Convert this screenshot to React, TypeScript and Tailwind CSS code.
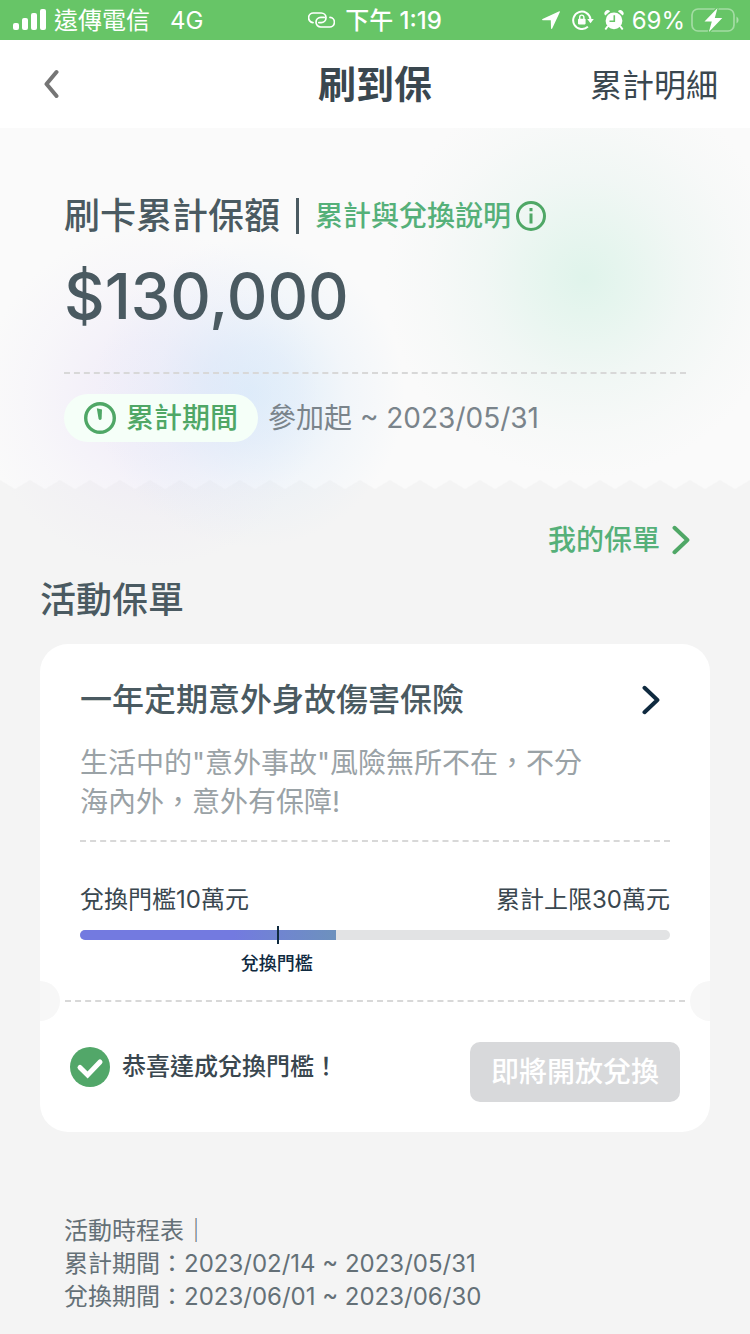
import clsx from 'clsx'

const LIMIT = 300000
const THRESHOLD = 100000
const AMOUNT = 130000

const schedule = [
  { label: '累計期間', range: '2023/02/14 ~ 2023/05/31' },
  { label: '兌換期間', range: '2023/06/01 ~ 2023/06/30' },
]

function Chevron({ className }: { className?: string }) {
  return (
    <svg viewBox="0 0 18 30" fill="none" stroke="currentColor" strokeWidth="4" strokeLinecap="round" strokeLinejoin="round" className={clsx('h-[30px] w-[18px] shrink-0', className)} aria-hidden="true">
      <path d="M2.5 2.8 15.4 15 2.5 27.2" />
    </svg>
  )
}

function StatusBar() {
  return (
    <div className="grid h-10 grid-cols-[1fr_auto_1fr] items-center bg-[#67c567] text-2xl leading-[34px] text-white">
      <div className="flex items-center pl-[13px]">
        <svg viewBox="0 0 33 22" fill="currentColor" className="h-[22px] w-[33px]" aria-hidden="true">
          <rect x="0" y="14" width="6" height="7" rx="2" />
          <rect x="9" y="9" width="6" height="12" rx="2" />
          <rect x="18" y="4" width="6" height="17" rx="2" />
          <rect x="27" y="0" width="6" height="21" rx="2" />
        </svg>
        <span className="ml-2 pt-0.5">遠傳電信</span>
        <span className="ml-5 pt-0.5">4G</span>
      </div>
      <div className="flex items-center gap-2.5">
        <svg viewBox="0 0 27 16" fill="none" stroke="currentColor" strokeWidth="1.7" strokeLinecap="round" className="h-4 w-[27px]" aria-hidden="true">
          <path d="M5 10.600A4.800 4.800 0 0 1 5.800 1h7.400a4.800 4.800 0 0 1 0 9.600h-2.400" />
          <path d="M22 5.400a4.800 4.800 0 0 1-.8 9.600h-8.400a4.800 4.800 0 0 1 0-9.600h3.400" />
        </svg>
        <span className="pt-0.5 font-medium">下午 1:19</span>
      </div>
      <div className="flex items-center justify-end pr-[11px]">
        <svg viewBox="0 0 18 18" fill="currentColor" className="size-[18px]" aria-hidden="true">
          <path d="M17.300.3.500 8c-.6.300-.5 1.200.2 1.200l8.100.1.200 8c0 .7.900.9 1.200.2L17.900.9c.2-.4-.2-.8-.6-.6z" />
        </svg>
        <svg viewBox="0 0 22 20" fill="none" stroke="currentColor" strokeWidth="2" className="ml-3 h-5 w-[22px]" aria-hidden="true">
          <path d="M15.900 16.600A8.700 8.700 0 1 1 18.500 9" />
          <path d="M15.200 9h6.600l-3.300 4.300z" fill="currentColor" stroke="none" />
          <rect x="6" y="8.800" width="7.600" height="5.600" rx="0.800" fill="currentColor" stroke="none" />
          <path d="M7.700 9V7.200a2.100 2.100 0 0 1 4.200 0V9" strokeWidth="1.400" />
        </svg>
        <svg viewBox="0 0 20 20" className="ml-2.5 size-5" aria-hidden="true">
          <path d="M3.500 16.500 1.800 18.800M16.500 16.500l1.700 2.300" stroke="currentColor" strokeWidth="2" strokeLinecap="round" />
          <circle cx="10" cy="10.800" r="8.400" fill="currentColor" />
          <path d="M1.300 5.600a3.200 3.200 0 0 1 4.800-4.300zM18.700 5.600a3.200 3.200 0 0 0-4.800-4.300z" fill="currentColor" />
          <path d="M10.300 5.200v6H5.500" fill="none" stroke="#67c567" strokeWidth="1.600" />
        </svg>
        <span className="ml-2 pt-0.5">69%</span>
        <svg viewBox="0 0 48 24" className="ml-1.5 h-6 w-12" aria-hidden="true">
          <rect x="1" y="1" width="42" height="22" rx="6" fill="none" stroke="#fff" strokeOpacity="0.400" strokeWidth="1.700" />
          <path d="M45.500 8.500v7a4 4 0 0 0 0-7z" fill="#fff" fillOpacity="0.450" />
          <path d="M26.500 0 13.500 13.600h7.300L17.900 24l13.400-13.900h-7.500z" fill="#fff" stroke="#67c567" strokeWidth="2.500" paintOrder="stroke" />
        </svg>
      </div>
    </div>
  )
}

function NavBar() {
  return (
    <header className="grid h-22 grid-cols-[1fr_auto_1fr] items-center bg-white px-8 text-[#3a474f]">
      <button type="button" aria-label="返回" className="flex size-10 items-center justify-center text-[#757575]">
        <svg viewBox="0 0 16 30" fill="none" stroke="currentColor" strokeWidth="4" strokeLinecap="round" strokeLinejoin="round" className="h-[30px] w-4" aria-hidden="true">
          <path d="M12.500 3 2.500 15l10 12" />
        </svg>
      </button>
      <h1 className="text-[38px] leading-[56px] font-bold">刷到保</h1>
      <a href="#detail" className="justify-self-end pt-1 text-[32px] leading-[48px]">累計明細</a>
    </header>
  )
}

function Backdrop() {
  return (
    <div className="pointer-events-none absolute inset-0 -z-10 overflow-hidden" aria-hidden="true">
      <div className="h-[352px] bg-[#fafafa]" />
      <svg className="block h-[9px] w-full" preserveAspectRatio="none">
        <defs>
          <pattern id="teeth" width="30" height="9" patternUnits="userSpaceOnUse">
            <path d="M0 0h30L15 9z" fill="#fafafa" />
          </pattern>
        </defs>
        <rect width="100%" height="9" fill="url(#teeth)" />
      </svg>
      <div className="absolute -top-[50px] left-[385px] size-[400px] bg-[radial-gradient(closest-side,#d0f0e2a0,#d6f1e580_25%,#dcf0e850_50%,#e2f0ea20_78%,transparent)]" />
      <div className="absolute top-[100px] -left-[20px] size-[340px] bg-[radial-gradient(closest-side,#dfd3f550,#dfd3f540_35%,#dfd3f518_70%,transparent)]" />
      <div className="absolute top-[110px] left-[95px] size-[310px] bg-[radial-gradient(closest-side,#c5e2fa80,#c9e2f968_30%,#cfe4f930_62%,transparent)]" />
    </div>
  )
}

function Summary() {
  return (
    <section className="px-16 pt-16 text-[#4a5a61]">
      <div className="flex h-12 items-center">
        <h2 className="text-4xl font-medium">刷卡累計保額</h2>
        <span className="ml-4 h-9 w-[3px] bg-[#4a5a61]" />
        <a href="#info" className="ml-4 flex items-center gap-1 text-[28px] font-medium text-[#55b079]">
          累計與兌換說明
          <svg viewBox="0 0 32 32" fill="none" stroke="#4fa766" strokeWidth="3" className="size-8" aria-hidden="true">
            <circle cx="16" cy="16" r="13.500" />
            <path d="M16 13.500v10M16 8v3.200" />
          </svg>
        </a>
      </div>
      <p className="mt-4 text-[63px] leading-20 font-medium">${AMOUNT.toLocaleString('en-US')}</p>
      <div className="mt-9 border-t-2 border-dashed border-[#d8d8d8]" />
      <div className="mt-5 flex h-12 items-center text-[28px]">
        <span className="flex h-12 items-center gap-2.5 rounded-full bg-[#f5fff8] px-5 font-medium text-[#4fa766]">
          <svg viewBox="0 0 32 32" fill="none" stroke="currentColor" className="size-8" aria-hidden="true">
            <circle cx="16" cy="16" r="14.300" strokeWidth="3.400" />
            <path d="M12.800 6.200 18 7.500 17.600 17q-1.700 2-3 0z" fill="currentColor" stroke="none" />
          </svg>
          累計期間
        </span>
        <span className="ml-2.5 text-[#7a848b]">參加起 ~ 2023/05/31</span>
      </div>
    </section>
  )
}

function PolicyCard() {
  const percent = (AMOUNT / LIMIT) * 100
  const mark = (THRESHOLD / LIMIT) * 100

  return (
    <article className="mt-5 rounded-[28px] bg-white">
      <div className="px-10 pt-8">
        <a href="#policy" className="flex h-12 items-center justify-between pr-2.5 text-[32px] font-medium text-[#4a5a61]">
          <h3>一年定期意外身故傷害保險</h3>
          <Chevron className="text-[#0f2a3f]" />
        </a>
        <p className="mt-5 max-w-[510px] text-[28px] leading-[39px] text-[#9aa2a6]">
          生活中的"意外事故"風險無所不在，不分海內外，意外有保障!
        </p>
        <div className="mt-[18px] border-t-2 border-dashed border-[#d8d8d8]" />
        <div className="mt-[42px] flex justify-between text-2xl text-[#3a474f]">
          <span>兌換門檻10萬元</span>
          <span>累計上限30萬元</span>
        </div>
        <div className="relative mt-3.5">
          <div className="h-2.5 overflow-hidden rounded-full bg-[#e2e3e4]">
            <div className="h-full bg-linear-to-r from-[#737ae0] from-60% to-[#6d91bd]" style={{ width: `${percent}%` }} />
          </div>
          <div className="absolute -top-1 h-[18px] w-0.5 bg-[#0f2a3f]" style={{ left: `${mark}%` }} />
        </div>
        <div className="mt-2.5 flex">
          <span className="-translate-x-1/2 text-lg font-medium text-[#0f2a3f]" style={{ marginLeft: `${mark}%` }}>兌換門檻</span>
        </div>
      </div>
      <div className="mt-[3px] flex items-center justify-between">
        <span className="h-10 w-5 rounded-r-full bg-[#f7f7f7]" />
        <span className="mx-[5px] grow border-t-2 border-dashed border-[#d8d8d8]" />
        <span className="h-10 w-5 rounded-l-full bg-[#f7f7f7]" />
      </div>
      <div className="flex items-center justify-between px-[30px] pt-[21px] pb-[30px]">
        <p className="flex items-center gap-3 pb-2.5 text-2xl font-medium text-[#3a474f]">
          <svg viewBox="0 0 40 40" fill="none" className="size-10" aria-hidden="true">
            <circle cx="20" cy="20" r="20" fill="#52a769" />
            <path d="M10 20.500 17.600 28 30 15" stroke="#fff" strokeWidth="5" strokeLinecap="round" />
          </svg>
          恭喜達成兌換門檻！
        </p>
        <button type="button" disabled className="h-15 w-[210px] rounded-[10px] bg-[#d8d9db] text-[28px] font-medium text-white">即將開放兌換</button>
      </div>
    </article>
  )
}

export default function App() {
  return (
    <div className="min-h-screen bg-[#f4f4f4] font-['Inter','Noto_Sans_CJK_TC',sans-serif]" lang="zh-Hant">
      <StatusBar />
      <NavBar />
      <main className="relative isolate">
        <Backdrop />
        <Summary />
        <section className="px-10 pt-[78px]">
          <div className="flex justify-end pr-5">
            <a href="#mine" className="flex h-10 items-center gap-3 text-[28px] font-medium text-[#55b079]">
              我的保單
              <Chevron className="text-[#4fa766]" />
            </a>
          </div>
          <h2 className="mt-4 text-4xl leading-[48px] font-medium text-[#4a5a61]">活動保單</h2>
          <PolicyCard />
        </section>
        <section className="px-16 pt-[82px] text-2xl leading-[33px] text-[#647077]">
          <h2>活動時程表｜</h2>
          {schedule.map(s => (
            <p key={s.label}>{s.label}：{s.range}</p>
          ))}
        </section>
      </main>
    </div>
  )
}
